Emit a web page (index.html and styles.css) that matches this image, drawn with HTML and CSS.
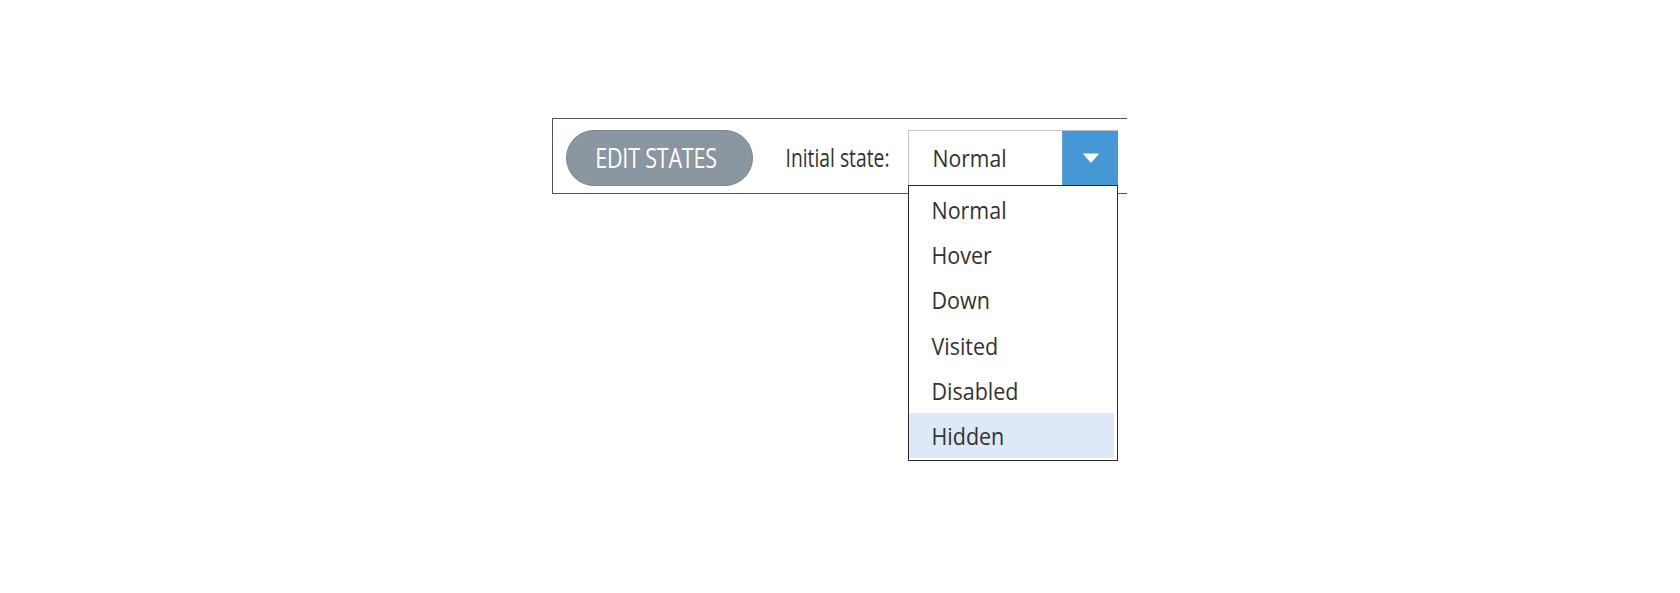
FILE: index.html
```html
<!DOCTYPE html>
<html lang="en">
<head>
<meta charset="utf-8">
<title>Edit States</title>
<link rel="stylesheet" href="styles.css">
</head>
<body>
<div class="page">
  <div class="toolbar">
    <button class="pill"><span class="pill-text">EDIT STATES</span></button>
    <span class="label"><span class="label-text">Initial state:</span></span>
    <div class="select-wrap">
      <div class="select">
        <span class="select-value"><span class="txt">Normal</span></span>
        <span class="select-btn">
          <svg width="16" height="10" viewBox="0 0 16 10"><polygon points="1,1 15,1 8,9" fill="#fff" stroke="#fff" stroke-width="1.2" stroke-linejoin="round"/></svg>
        </span>
      </div>
      <ul class="menu">
        <li class="item"><span class="txt">Normal</span></li>
        <li class="item"><span class="txt">Hover</span></li>
        <li class="item"><span class="txt">Down</span></li>
        <li class="item"><span class="txt">Visited</span></li>
        <li class="item"><span class="txt">Disabled</span></li>
        <li class="item item-active"><span class="txt">Hidden</span></li>
      </ul>
    </div>
  </div>
</div>
</body>
</html>
```
FILE: styles.css
```css
html, body {
  margin: 0;
  padding: 0;
  background: #ffffff;
}
body {
  width: 1680px;
  height: 593px;
  overflow: hidden;
  font-family: "Open Sans", "Noto Sans", sans-serif;
  color: #333;
}
.page {
  padding: 118px 0 0 552px;
}
.toolbar {
  box-sizing: border-box;
  width: 575px;
  height: 76px;
  border: 1.5px solid #555;
  border-right: none;
  display: flex;
  align-items: flex-start;
  padding: 10.5px 0 0 12.5px;
  background: #fff;
}
.pill {
  box-sizing: border-box;
  width: 187px;
  height: 56px;
  border-radius: 28px;
  background: #8b97a0;
  border: 1px solid #7c8891;
  display: flex;
  align-items: center;
  justify-content: center;
  padding: 0 6px 0 0;
  margin: 0;
  font-family: inherit;
  cursor: pointer;
}
.pill-text {
  display: inline-block;
  color: #fff;
  font-size: 21.5px;
  letter-spacing: -0.2px;
  transform: scaleY(1.25);
}
.label {
  margin-left: 33px;
  height: 56px;
  display: flex;
  align-items: center;
  color: #333;
}
.label-text {
  display: inline-block;
  font-size: 19.3px;
  transform: scaleY(1.28);
}
.select-wrap {
  position: relative;
  margin-left: 19px;
}
.select {
  box-sizing: border-box;
  width: 210px;
  height: 55px;
  border: 1px solid #c4c4c4;
  border-right: none;
  border-bottom: none;
  display: flex;
  background: #fff;
}
.select-value {
  flex: 1;
  display: flex;
  align-items: center;
  padding-left: 23px;
  font-size: 21.2px;
  color: #333;
}
.txt {
  display: inline-block;
  transform: scaleY(1.14);
}
.select-btn {
  width: 55px;
  background: #4597d6;
  border-left: 1px solid #5ba4dc;
  display: flex;
  align-items: center;
  justify-content: center;
  padding-top: 1px;
}
.menu {
  position: absolute;
  left: 0;
  top: 55px;
  box-sizing: border-box;
  width: 210px;
  margin: 0;
  padding: 1px 3px 2px 0;
  list-style: none;
  background: #fff;
  border: 1.8px solid #2a2a2a;
  z-index: 2;
}
.item {
  height: 45.3px;
  display: flex;
  align-items: center;
  padding-left: 22px;
  font-size: 21.5px;
  color: #333;
}
.item-active {
  background: #dde9f7;
}
```
